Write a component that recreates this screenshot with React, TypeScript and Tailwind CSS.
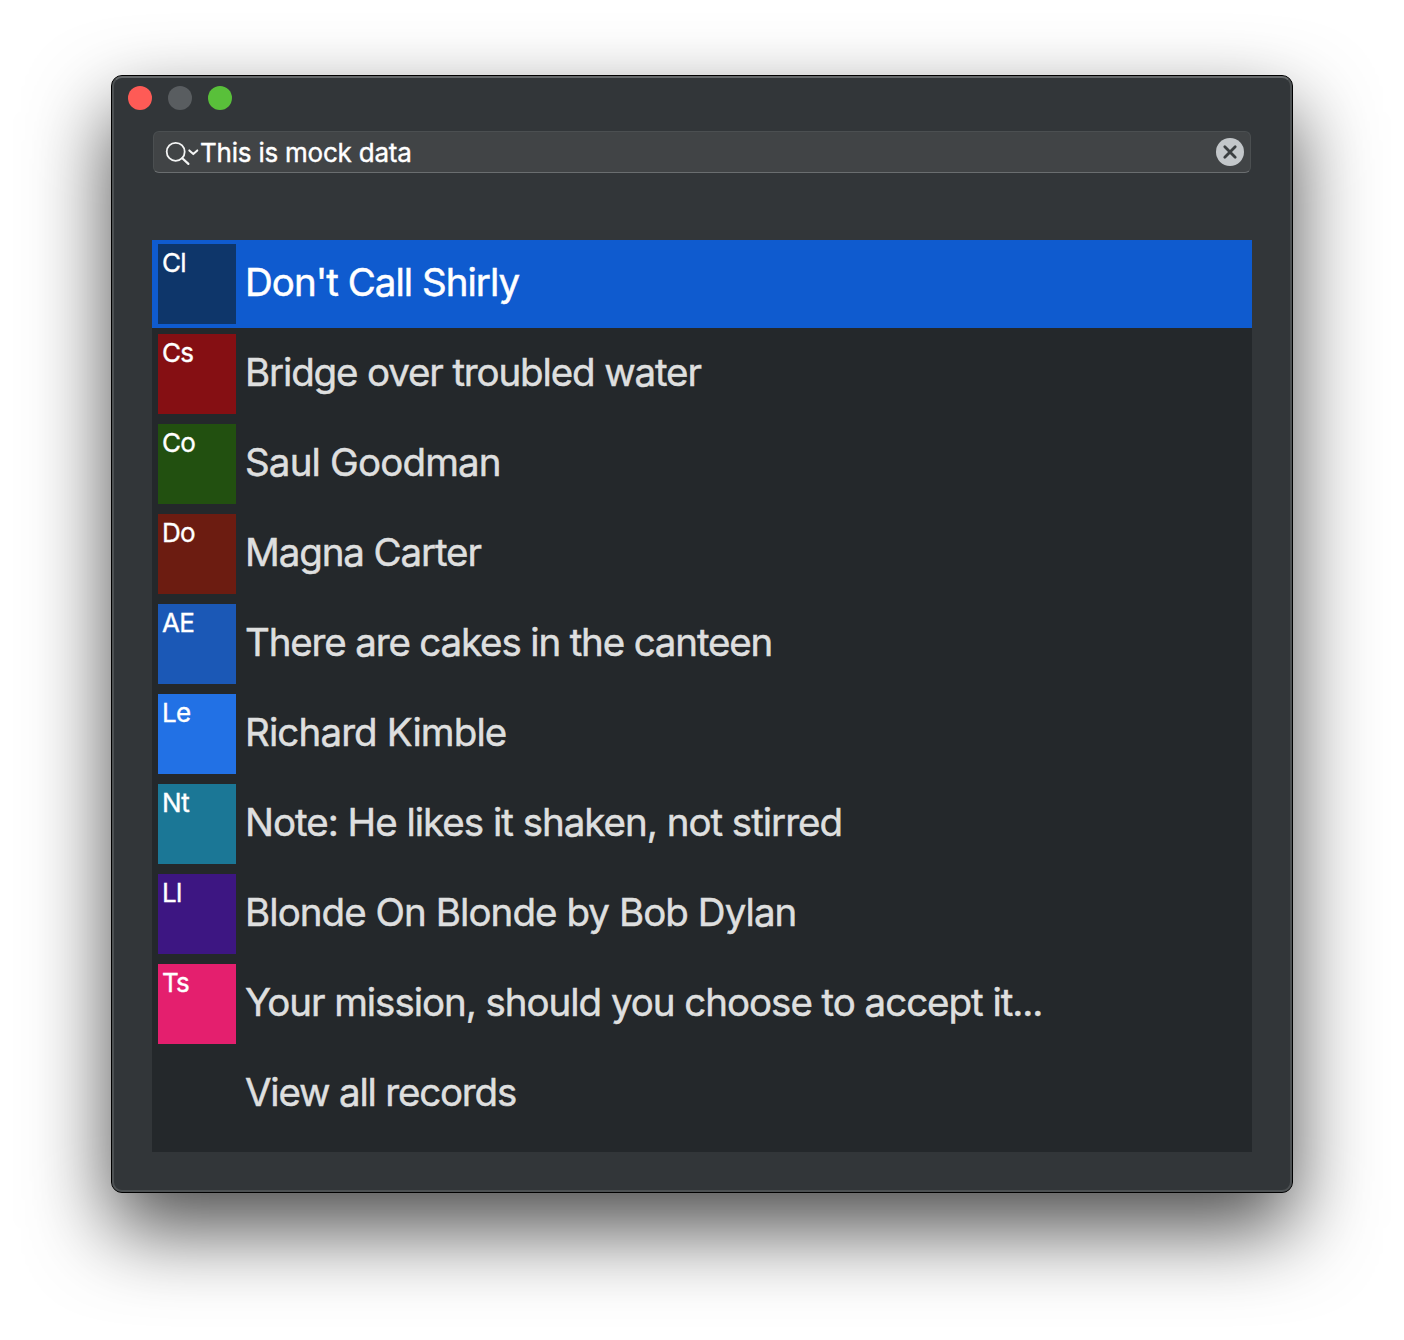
type Item = { code: string; color: string; label: string; tracking: string };

const items: Item[] = [
  { code: "Cl", color: "bg-[#0e366a]", label: "Don't Call Shirly", tracking: "tracking-[-0.98px]" },
  { code: "Cs", color: "bg-[#850f13]", label: "Bridge over troubled water", tracking: "tracking-[-1.14px]" },
  { code: "Co", color: "bg-[#225010]", label: "Saul Goodman", tracking: "tracking-[-0.84px]" },
  { code: "Do", color: "bg-[#6c1c11]", label: "Magna Carter", tracking: "tracking-[-1.12px]" },
  { code: "AE", color: "bg-[#1b58b6]", label: "There are cakes in the canteen", tracking: "tracking-[-1.16px]" },
  { code: "Le", color: "bg-[#2271e5]", label: "Richard Kimble", tracking: "tracking-[-0.87px]" },
  { code: "Nt", color: "bg-[#1b7796]", label: "Note: He likes it shaken, not stirred", tracking: "tracking-[-1.01px]" },
  { code: "Ll", color: "bg-[#3d1682]", label: "Blonde On Blonde by Bob Dylan", tracking: "tracking-[-0.94px]" },
  { code: "Ts", color: "bg-[#e41f6e]", label: "Your mission, should you choose to accept it...", tracking: "tracking-[-1.04px]" },
  { code: "", color: "", label: "View all records", tracking: "tracking-[-1.2px]" },
];

function SearchField() {
  return (
    <div className="mx-[39px] mt-[21px] flex h-[42px] items-center rounded-[6px] border border-[#4b4f51] border-b-[#6a6e70] bg-[#414446] pr-[6px] pl-[10px]">
      <svg className="mt-px h-8 w-9 shrink-0" viewBox="0 0 36 32" fill="none" stroke="#f4f5f5" strokeLinecap="round" strokeLinejoin="round">
        <circle cx="11.7" cy="14.8" r="9" strokeWidth="1.8" />
        <path d="M18.3 21.2 24.4 26.9" strokeWidth="2.2" />
        <path d="M25.3 13.4 29.3 17.1 33.3 13.4" strokeWidth="2" />
      </svg>
      <span className="grow pt-0.5 text-[26px] leading-8 tracking-[-0.22px] text-white [-webkit-text-stroke:0.4px_currentColor]">This is mock data</span>
      <svg className="h-7 w-7 shrink-0" viewBox="0 0 28 28">
        <circle cx="14" cy="14" r="14" fill="#c3c7ca" />
        <path d="M8.8 8.8 19.2 19.2M19.2 8.8 8.8 19.2" stroke="#3b3f41" strokeWidth="2.8" strokeLinecap="round" />
      </svg>
    </div>
  );
}

function Row({ item, selected }: { item: Item; selected: boolean }) {
  return (
    <li className={selected ? "mb-0.5 flex h-[88px] items-center bg-[#0f5bcf] pl-1.5 text-white" : "mb-0.5 flex h-[88px] items-center pl-1.5 text-[#dedfdf]"}>
      <div className={`h-20 w-[78px] shrink-0 pt-[3px] pl-1 text-[26px] leading-8 tracking-[-0.8px] text-white [-webkit-text-stroke:0.35px_currentColor] ${item.color}`}>{item.code}</div>
      <span className={`ml-[9px] pb-1 text-[38.5px] leading-[48px] whitespace-nowrap [-webkit-text-stroke:0.5px_currentColor] ${item.tracking}`}>{item.label}</span>
    </li>
  );
}

export default function App() {
  return (
    <main className="h-[1340px] w-[1404px] overflow-hidden bg-white px-[111px] pt-[75px] font-['Inter',sans-serif]">
      <section className="h-[1118px] w-[1182px] rounded-[11px] border border-black bg-[#323639] shadow-[0_36px_82px_rgba(0,0,0,0.7)]">
        <div className="h-full rounded-[10px] border-2 border-[#4d5153] border-t-[#66696b]">
          <div className="flex gap-4 pt-2 pl-[14px]">
            <span className="h-6 w-6 rounded-full bg-[#fe5b56]" />
            <span className="h-6 w-6 rounded-full bg-[#595d60]" />
            <span className="h-6 w-6 rounded-full bg-[#59c03a]" />
          </div>
          <SearchField />
          <ul className="mx-[38px] mt-[67px] h-[912px] bg-[#24282b]">
            {items.map((item, i) => (
              <Row key={item.label} item={item} selected={i === 0} />
            ))}
          </ul>
        </div>
      </section>
    </main>
  );
}
